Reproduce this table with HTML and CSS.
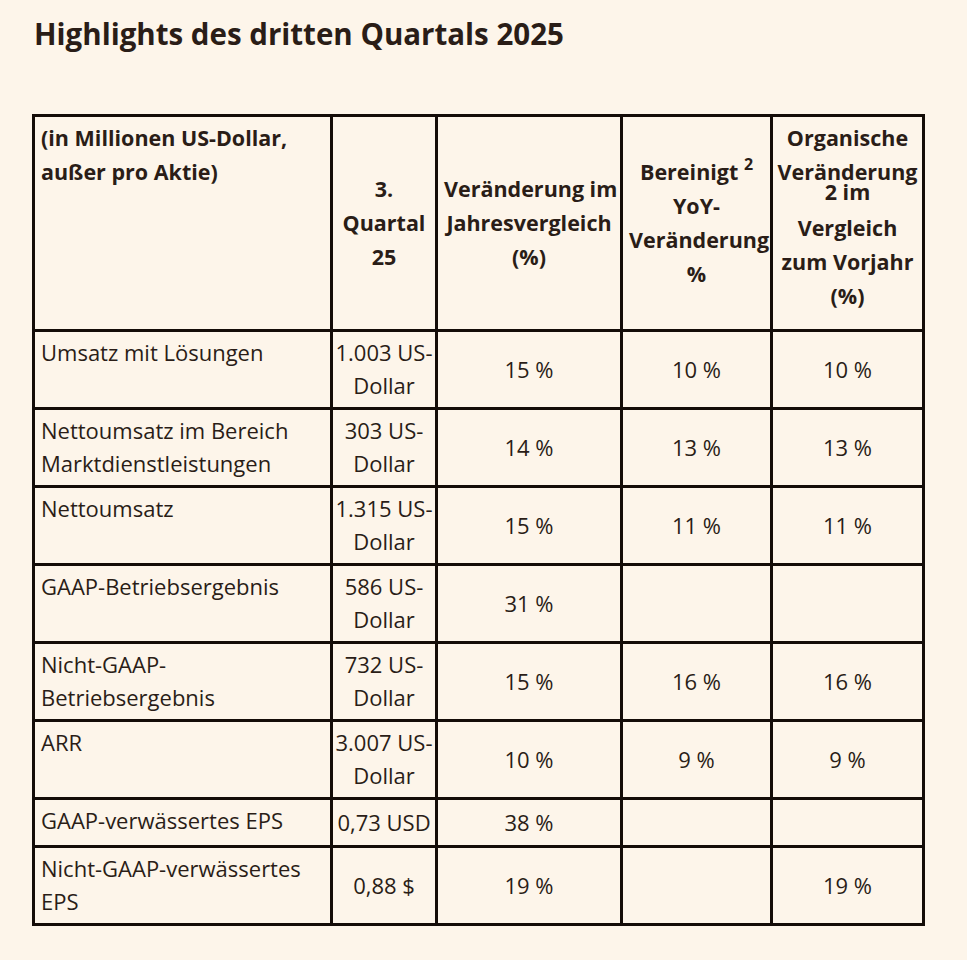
FILE: index.html
```html
<!DOCTYPE html>
<html lang="de">
<head>
<meta charset="utf-8">
<title>Highlights des dritten Quartals 2025</title>
<link rel="stylesheet" href="styles.css">
</head>
<body>
<main class="page">
  <h2 class="title">Highlights des dritten Quartals 2025</h2>
  <table class="hl">
    <colgroup>
      <col class="c1"><col class="c2"><col class="c3"><col class="c4"><col class="c5">
    </colgroup>
    <thead>
      <tr class="head">
        <th class="label">(in Millionen US-Dollar,<br>außer pro Aktie)</th>
        <th>3.<br>Quartal<br>25</th>
        <th>Veränderung im<br>Jahresvergleich<br>(%)</th>
        <th>Bereinigt <sup>2</sup><br>YoY-<br>Veränderung<br>%</th>
        <th class="organic">Organische<br>Veränderung<br><span class="supline">2 im</span>Vergleich<br>zum Vorjahr<br>(%)</th>
      </tr>
    </thead>
    <tbody>
      <tr><td class="label">Umsatz mit Lösungen</td><td class="val">1.003 US-<br>Dollar</td><td>15 %</td><td>10 %</td><td>10 %</td></tr>
      <tr><td class="label">Nettoumsatz im Bereich<br>Marktdienstleistungen</td><td class="val">303 US-<br>Dollar</td><td>14 %</td><td>13 %</td><td>13 %</td></tr>
      <tr><td class="label">Nettoumsatz</td><td class="val">1.315 US-<br>Dollar</td><td>15 %</td><td>11 %</td><td>11 %</td></tr>
      <tr><td class="label">GAAP-Betriebsergebnis</td><td class="val">586 US-<br>Dollar</td><td>31 %</td><td></td><td></td></tr>
      <tr><td class="label">Nicht-GAAP-<br>Betriebsergebnis</td><td class="val">732 US-<br>Dollar</td><td>15 %</td><td>16 %</td><td>16 %</td></tr>
      <tr><td class="label">ARR</td><td class="val">3.007 US-<br>Dollar</td><td>10 %</td><td>9 %</td><td>9 %</td></tr>
      <tr class="single"><td class="label">GAAP-verwässertes EPS</td><td class="val">0,73 USD</td><td>38 %</td><td></td><td></td></tr>
      <tr><td class="label">Nicht-GAAP-verwässertes<br>EPS</td><td class="val">0,88 $</td><td>19 %</td><td></td><td>19 %</td></tr>
    </tbody>
  </table>
</main>
</body>
</html>
```

FILE: styles.css
```css
html, body {
  margin: 0;
  padding: 0;
  background: #fdf5ea;
}

body {
  font-family: "Open Sans", "Noto Sans", sans-serif;
  color: #2a1d17;
}

.page {
  padding: 14px 32px 20px 32px;
}

.title {
  margin: 0 0 60px 2px;
  font-size: 29.5px;
  line-height: 40px;
  font-weight: 700;
  color: #2a1d17;
}

.hl {
  border-collapse: collapse;
  table-layout: fixed;
  width: 893px;
  font-size: 22px;
  line-height: 33px;
}

.c1 { width: 298px; }
.c2 { width: 105px; }
.c3 { width: 185px; }
.c4 { width: 150px; }
.c5 { width: 152px; }

.hl th,
.hl td {
  border: 3px solid #140c08;
  padding: 4px 6px 5px 6px;
  text-align: center;
  vertical-align: middle;
  white-space: nowrap;
}

.hl th {
  font-size: 21.5px;
  font-weight: 700;
  line-height: 34px;
}

.head th {
  height: 203px;
}

.single td {
  height: 36px;
}

.hl .label {
  text-align: left;
  vertical-align: top;
}

.hl th.label,
.hl th.organic {
  padding-top: 4px;
  vertical-align: top;
}

.hl th.organic {
  padding-left: 2px;
  padding-right: 2px;
}

.hl .val {
  padding-left: 0;
  padding-right: 0;
}

.hl sup {
  font-size: 16px;
  line-height: 0;
  vertical-align: 10px;
}

.supline {
  display: block;
  margin-top: -14px;
  margin-bottom: 2px;
}
```
